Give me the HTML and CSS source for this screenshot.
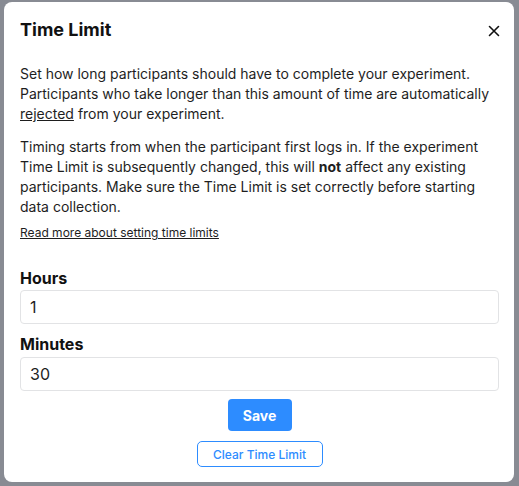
FILE: index.html
```html
<!DOCTYPE html>
<html lang="en">
<head>
<meta charset="utf-8">
<title>Time Limit</title>
<link rel="stylesheet" href="styles.css">
</head>
<body>
<div class="overlay">
  <div class="modal" role="dialog" aria-labelledby="tl-title">
    <div class="modal-header">
      <h2 id="tl-title" class="modal-title">Time Limit</h2>
      <button class="close-btn" aria-label="Close">
        <svg width="12" height="12" viewBox="0 0 12 12" aria-hidden="true">
          <path d="M1.5 1.5 L10.5 10.5 M10.5 1.5 L1.5 10.5" stroke="#111" stroke-width="1.6" stroke-linecap="round" fill="none"/>
        </svg>
      </button>
    </div>
    <div class="modal-body">
      <p class="text">Set how long participants should have to complete your experiment. Participants who take longer than this amount of time are automatically <u>rejected</u> from your experiment.</p>
      <p class="text text-second">Timing starts from when the participant first logs in. If the experiment Time Limit is subsequently changed, this will <strong>not</strong> affect any existing participants. Make sure the Time Limit is set correctly before starting data collection.</p>
      <a class="read-more" href="#">Read more about setting time limits</a>
      <label class="field-label first" for="hours">Hours</label>
      <input id="hours" class="field-input" type="text" value="1">
      <label class="field-label" for="minutes">Minutes</label>
      <input id="minutes" class="field-input" type="text" value="30">
      <div class="actions">
        <button class="btn-save">Save</button>
        <button class="btn-clear">Clear Time Limit</button>
      </div>
    </div>
  </div>
</div>
</body>
</html>
```
FILE: styles.css
```css
html, body {
  margin: 0;
  padding: 0;
}
body {
  width: 519px;
  height: 486px;
  background: #888b93;
  font-family: Inter, "Noto Sans", "Liberation Sans", sans-serif;
  color: #1e1e1e;
  overflow: hidden;
}
.overlay {
  padding: 2px 5px 4px 4px;
  box-sizing: border-box;
  height: 486px;
}
.modal {
  background: #fff;
  border-radius: 8px;
  height: 480px;
  box-sizing: border-box;
  display: flex;
  flex-direction: column;
}
.modal-header {
  display: flex;
  justify-content: space-between;
  align-items: flex-start;
  padding: 16px 16px 0 16px;
}
.modal-title {
  margin: 0;
  font-size: 18px;
  line-height: 24px;
  font-weight: 700;
  color: #111;
}
.close-btn {
  border: 0;
  background: none;
  padding: 0;
  margin-top: 7px;
  margin-right: -2px;
  width: 12px;
  height: 12px;
  display: flex;
  cursor: pointer;
}
.modal-body {
  padding: 22px 15px 0 16px;
  display: flex;
  flex-direction: column;
}
.text {
  margin: 0;
  font-size: 14px;
  line-height: 20px;
  color: #1e1e1e;
}
.text-second {
  margin-top: 13px;
}
.read-more {
  display: block;
  margin-top: 8px;
  font-size: 12px;
  line-height: 16px;
  color: #1e1e1e;
  text-decoration: underline;
  align-self: flex-start;
}
.field-label {
  display: block;
  margin-top: 10px;
  font-size: 16px;
  line-height: 20px;
  font-weight: 700;
  color: #111;
}
.field-label.first {
  margin-top: 27px;
}
.field-input {
  display: block;
  margin: 2px 0 0 0;
  height: 34px;
  box-sizing: border-box;
  border: 1px solid #e2e3e5;
  border-radius: 4px;
  padding: 0 9px;
  font-family: inherit;
  font-size: 16px;
  color: #1e1e1e;
  background: #fff;
  width: 100%;
}
#minutes {
  margin-top: 3px;
}
.actions {
  display: flex;
  flex-direction: column;
  align-items: center;
  margin-top: 8px;
}
.btn-save {
  width: 64px;
  height: 32px;
  border: 0;
  border-radius: 4px;
  background: #2d8cff;
  color: #fff;
  font-family: inherit;
  font-size: 14px;
  font-weight: 700;
  cursor: pointer;
}
.btn-clear {
  margin-top: 10px;
  width: 126px;
  height: 26px;
  border: 1px solid #2d8cff;
  border-radius: 5px;
  background: #fff;
  color: #2d8cff;
  font-family: inherit;
  font-size: 12px;
  font-weight: 500;
  cursor: pointer;
}
```
